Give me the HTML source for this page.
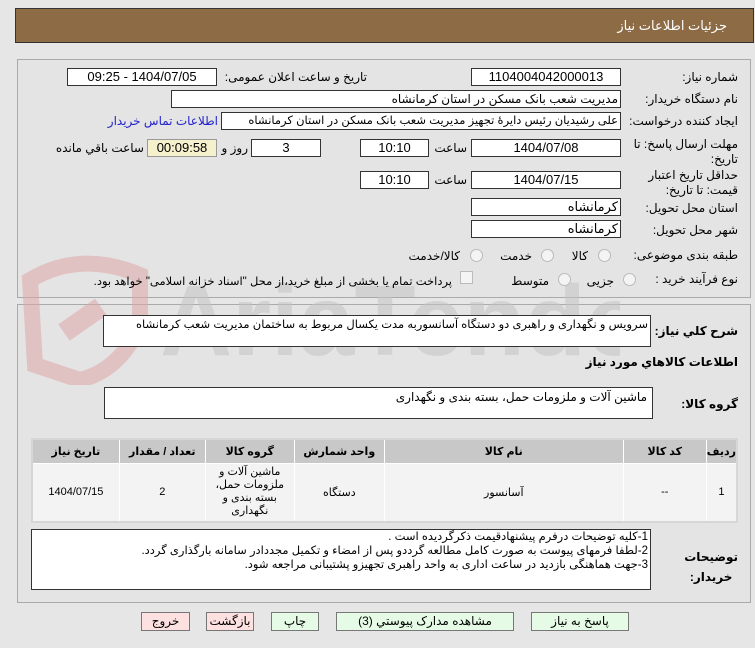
<!DOCTYPE html>
<html><head><meta charset="utf-8"><style>
body{margin:0;width:755px;height:648px;background:#e6e6e6;font-family:"Liberation Sans","DejaVu Sans",sans-serif;font-size:12px;color:#000;position:relative;overflow:hidden}
.a{position:absolute}
.box{position:absolute;background:#fff;border:1px solid #333;box-sizing:border-box;direction:rtl;text-align:center;line-height:16px;font-size:13px;white-space:nowrap;overflow:hidden}
.l{position:absolute;direction:rtl;white-space:nowrap;font-size:12px}
.btn{position:absolute;top:612px;height:19px;border:1px solid #777;box-sizing:border-box;background:#e6fbe6;text-align:center;line-height:17px;font-size:12px;direction:rtl}
.radio{position:absolute;width:11px;height:11px;border:1px solid #bbb;border-radius:50%;background:#f4f4f4}
td,th{border:1px solid #fff;padding:0;text-align:center;font-size:11px}
</style></head><body>
<div class="a" style="left:15px;top:8px;width:739px;height:35px;background:#8c6b45;border:1px solid #333;box-sizing:border-box"></div>
<div class="l" style="right:28px;top:18px;color:#fff;font-size:13px">جزئیات اطلاعات نیاز</div>

<div class="a" style="left:17px;top:59px;width:734px;height:239px;border:1px solid #aaa;box-sizing:border-box;background:#e4e4e4"></div>
<div class="a" style="left:17px;top:304px;width:734px;height:299px;border:1px solid #aaa;box-sizing:border-box;background:#e4e4e4"></div>

<!-- watermark -->
<svg class="a" style="left:0;top:245px;opacity:0.55" width="620" height="140">
<path d="M30 35 Q80 5 140 30 L140 80 Q120 125 80 135 L35 120 Z" fill="none" stroke="#e0a8a8" stroke-width="16"/>
<rect x="60" y="65" width="45" height="20" fill="#e0a8a8" transform="rotate(-35 82 75)"/>
<text x="160" y="110" font-size="100" font-weight="bold" fill="#c4c4c4" font-family="Liberation Sans">AriaTender.net</text>
</svg>

<div class="l" style="right:17px;top:70px">شماره نیاز:</div>
<div class="box" style="left:471px;top:68px;width:150px;height:18px">1104004042000013</div>
<div class="l" style="right:388px;top:70px">تاریخ و ساعت اعلان عمومی:</div>
<div class="box" style="left:67px;top:68px;width:150px;height:18px">1404/07/05 - 09:25</div>

<div class="l" style="right:17px;top:92px">نام دستگاه خریدار:</div>
<div class="box" style="left:171px;top:90px;width:450px;height:18px;text-align:right;padding-right:2px;font-size:12px">مدیریت شعب بانک مسکن در استان کرمانشاه</div>

<div class="l" style="right:17px;top:114px">ایجاد کننده درخواست:</div>
<div class="box" style="left:221px;top:112px;width:400px;height:18px;text-align:right;padding-right:2px;font-size:11.5px">علی رشیدیان رئیس دایرۀ تجهیز مدیریت شعب بانک مسکن در استان کرمانشاه</div>
<div class="l" style="right:537px;top:114px;color:#2222cc">اطلاعات تماس خریدار</div>

<div class="l" style="right:17px;top:137px;line-height:15px;text-align:right">مهلت ارسال پاسخ: تا<br>تاریخ:</div>
<div class="box" style="left:471px;top:139px;width:150px;height:18px">1404/07/08</div>
<div class="l" style="right:288px;top:141px">ساعت</div>
<div class="box" style="left:360px;top:139px;width:69px;height:18px">10:10</div>
<div class="box" style="left:251px;top:139px;width:70px;height:18px">3</div>
<div class="l" style="right:507px;top:141px">روز و</div>
<div class="box" style="left:147px;top:139px;width:70px;height:18px;background:#f5f1cc;border-color:#999">00:09:58</div>
<div class="l" style="right:611px;top:141px">ساعت باقي مانده</div>

<div class="l" style="right:17px;top:168px;line-height:15px;text-align:right">حداقل تاریخ اعتبار<br>قیمت: تا تاریخ:</div>
<div class="box" style="left:471px;top:171px;width:150px;height:18px">1404/07/15</div>
<div class="l" style="right:288px;top:173px">ساعت</div>
<div class="box" style="left:360px;top:171px;width:69px;height:18px">10:10</div>

<div class="l" style="right:17px;top:201px">استان محل تحویل:</div>
<div class="box" style="left:471px;top:198px;width:150px;height:18px;text-align:right;padding-right:2px">کرمانشاه</div>
<div class="l" style="right:17px;top:223px">شهر محل تحویل:</div>
<div class="box" style="left:471px;top:220px;width:150px;height:18px;text-align:right;padding-right:2px">کرمانشاه</div>

<div class="l" style="right:17px;top:248px">طبقه بندی موضوعی:</div>
<div class="radio" style="left:598px;top:249px"></div><div class="l" style="right:167px;top:249px">کالا</div>
<div class="radio" style="left:541px;top:249px"></div><div class="l" style="right:223px;top:249px">خدمت</div>
<div class="radio" style="left:470px;top:249px"></div><div class="l" style="right:295px;top:249px">کالا/خدمت</div>

<div class="l" style="right:17px;top:272px">نوع فرآیند خرید :</div>
<div class="radio" style="left:623px;top:273px"></div><div class="l" style="right:141px;top:274px">جزیی</div>
<div class="radio" style="left:558px;top:273px"></div><div class="l" style="right:206px;top:274px">متوسط</div>
<div class="a" style="left:460px;top:271px;width:11px;height:11px;border:1px solid #bbb;background:#f4f4f4"></div>
<div class="l" style="right:303px;top:274px;font-size:11.5px">پرداخت تمام یا بخشی از مبلغ خرید،از محل "اسناد خزانه اسلامی" خواهد بود.</div>

<div class="l" style="right:17px;top:324px;font-weight:bold">شرح كلي نياز:</div>
<div class="box" style="left:103px;top:315px;width:548px;height:32px;text-align:right;padding-right:2px;font-size:11.5px;line-height:18px">سرویس و نگهداری و راهبری دو دستگاه آسانسوربه مدت یکسال مربوط به ساختمان مدیریت شعب کرمانشاه</div>
<div class="l" style="right:17px;top:355px;font-weight:bold">اطلاعات كالاهاي مورد نياز</div>
<div class="l" style="right:17px;top:397px;font-weight:bold">گروه کالا:</div>
<div class="box" style="left:104px;top:387px;width:549px;height:32px;text-align:right;padding-right:5px;font-size:12px;line-height:18px">ماشین آلات و ملزومات حمل، بسته بندی و نگهداری</div>

<table class="a" style="left:31px;top:438px;width:707px;height:85px;border-collapse:collapse;direction:rtl;background:#f3f3f3;border:2px solid #d6d6d6">
<tr style="height:24px;background:#c8c8c8;font-weight:bold"><th style="width:29px">ردیف</th><th style="width:82px">کد کالا</th><th style="width:238px">نام کالا</th><th style="width:89px">واحد شمارش</th><th style="width:88px">گروه کالا</th><th style="width:85px">تعداد / مقدار</th><th>تاریخ نیاز</th></tr>
<tr><td>1</td><td>--</td><td>آسانسور</td><td>دستگاه</td><td style="line-height:13px">ماشین آلات و ملزومات حمل، بسته بندی و نگهداری</td><td>2</td><td>1404/07/15</td></tr>
</table>

<div class="l" style="right:17px;top:547px;font-weight:bold;line-height:20px;text-align:center">توضیحات<br>خریدار:</div>
<div class="box" style="left:31px;top:529px;width:620px;height:61px;text-align:right;padding-right:2px;font-size:11.5px;line-height:14px">1-کلیه توضیحات درفرم پیشنهادقیمت ذکرگردیده است .<br>2-لطفا فرمهای پیوست به صورت کامل مطالعه گرددو پس از امضاء و تکمیل مجددادر سامانه بارگذاری گردد.<br>3-جهت هماهنگی بازدید در ساعت اداری به واحد راهبری تجهیزو پشتیبانی مراجعه شود.</div>

<div class="btn" style="left:531px;width:98px">پاسخ به نیاز</div>
<div class="btn" style="left:336px;width:178px">مشاهده مدارک پیوستي (3)</div>
<div class="btn" style="left:271px;width:48px">چاپ</div>
<div class="btn" style="left:206px;width:48px;background:#fde0e0">بازگشت</div>
<div class="btn" style="left:141px;width:49px;background:#fde0e0">خروج</div>
</body></html>
